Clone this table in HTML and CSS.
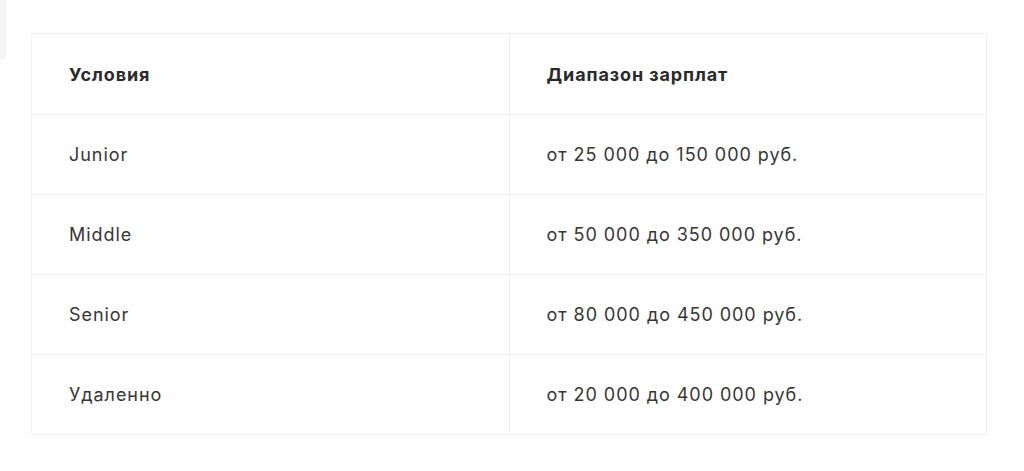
FILE: index.html
```html
<!DOCTYPE html>
<html lang="ru">
  <head>
    <meta charset="UTF-8" />
    <meta name="viewport" content="width=device-width, initial-scale=1.0" />
    <title>Зарплаты</title>
    <link rel="stylesheet" href="styles.css">
  </head>
  <body>
    <div class="side-tab"></div>
    <div class="page">
      <table class="salary">
        <thead>
          <tr>
            <th>Условия</th>
            <th>Диапазон зарплат</th>
          </tr>
        </thead>
        <tbody>
          <tr>
            <td>Junior</td>
            <td>от 25 000 до 150 000 руб.</td>
          </tr>
          <tr>
            <td>Middle</td>
            <td>от 50 000 до 350 000 руб.</td>
          </tr>
          <tr>
            <td>Senior</td>
            <td>от 80 000 до 450 000 руб.</td>
          </tr>
          <tr>
            <td>Удаленно</td>
            <td>от 20 000 до 400 000 руб.</td>
          </tr>
        </tbody>
      </table>
    </div>
  </body>
</html>
```

FILE: styles.css
```css
body {
  margin: 0;
  background: #fff;
  font-family: Inter, "Noto Sans", sans-serif;
  color: #333;
}
.side-tab {
  position: absolute;
  left: 0;
  top: 0;
  width: 7px;
  height: 60px;
  background: #f5f5f5;
  border-bottom-right-radius: 6px;
}
.page {
  padding: 33px 37px 0 31px;
}
.salary {
  width: 956px;
  border-collapse: collapse;
  table-layout: fixed;
}
.salary th,
.salary td {
  height: 79px;
  padding: 0 37px;
  border: 1px solid #f2f2f2;
  text-align: left;
  vertical-align: middle;
}
.salary th {
  height: 80px;
  font-size: 18px;
  font-weight: 700;
  letter-spacing: 0.9px;
  color: #2a2a2a;
}
.salary td {
  font-size: 18px;
  font-weight: 400;
  letter-spacing: 0.95px;
  color: #363636;
}
```
